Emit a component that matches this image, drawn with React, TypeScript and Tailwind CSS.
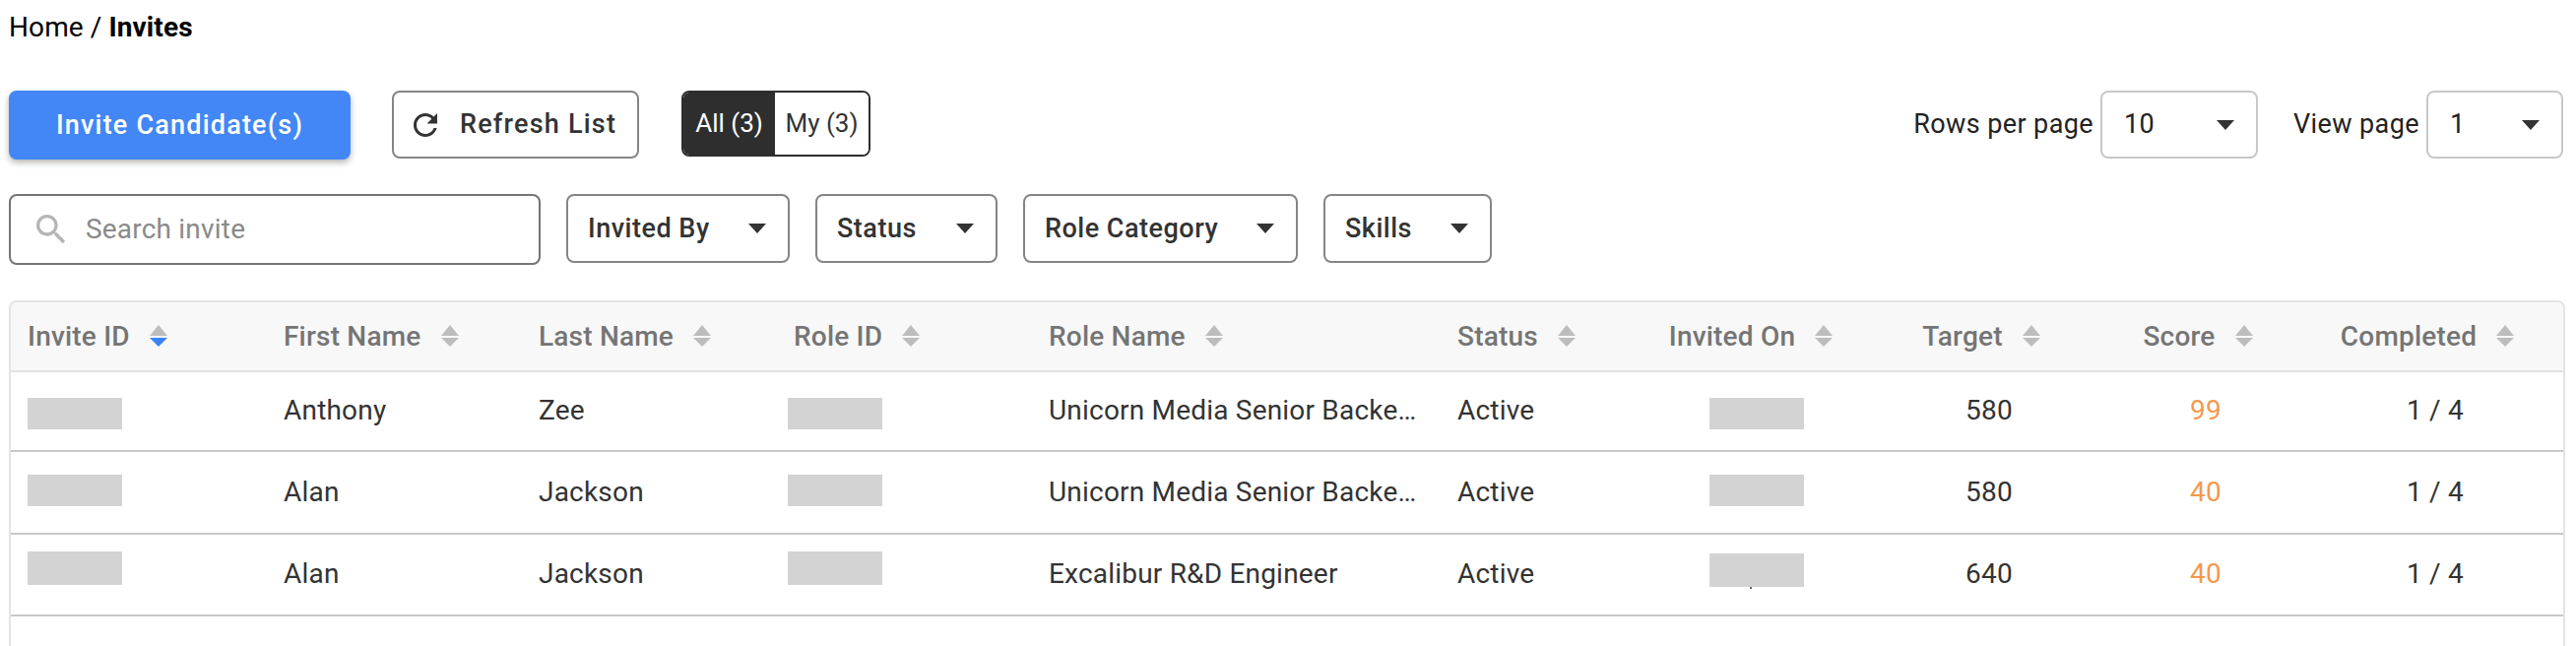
import React from "react";

const ARROW = "M0 0h18l-9 10z";

function Caret({ className = "" }: { className?: string }) {
  return (
    <svg width="18" height="10" viewBox="0 0 18 10" className={`shrink-0 ${className}`}>
      <path d={ARROW} fill="#333333" />
    </svg>
  );
}

function Sort({ active = false }: { active?: boolean }) {
  return (
    <svg width="18" height="22" viewBox="0 0 18 22" className="mb-[2px] shrink-0">
      <path d="M9 0L18 11H0z" fill="#bdbdbd" />
      <path d="M0 13h18l-9 9z" fill={active ? "#3b82f6" : "#bdbdbd"} />
    </svg>
  );
}

function Filter({ label, w }: { label: string; w: string }) {
  return (
    <div className={`flex h-[70px] items-center justify-between rounded-lg border-2 border-[#858585] pl-[20px] pr-[22px] ${w}`}>
      <span className="text-[27px] font-medium tracking-[0.5px] text-[#333333]">{label}</span>
      <Caret />
    </div>
  );
}

function Select({ value, w }: { value: string; w: string }) {
  return (
    <div className={`flex h-[69px] items-center justify-between rounded-lg border-2 border-[#c8c8c8] pl-[22px] pr-[22px] ${w}`}>
      <span className="text-[27px] tracking-[0.3px] text-[#222222]">{value}</span>
      <Caret />
    </div>
  );
}

const cols =
  "grid grid-cols-[258px_259px_259px_259px_415px_204px_238px_234px_206px_260px]";

const headers: { label: string; align: string; active?: boolean }[] = [
  { label: "Invite ID", align: "pl-[17px] gap-[20px]", active: true },
  { label: "First Name", align: "pl-[19px] gap-[20px]" },
  { label: "Last Name", align: "pl-[19px] gap-[20px]" },
  { label: "Role ID", align: "pl-[19px] gap-[20px]" },
  { label: "Role Name", align: "pl-[19px] gap-[20px]" },
  { label: "Status", align: "pl-[19px] gap-[20px]" },
  { label: "Invited On", align: "justify-center gap-[20px] pr-[12px]" },
  { label: "Target", align: "justify-center gap-[20px] pr-[16px]" },
  { label: "Score", align: "justify-center gap-[20px] pr-[16px]" },
  { label: "Completed", align: "justify-center gap-[20px] pr-[16px]" },
];

const rows = [
  { first: "Anthony", last: "Zee", role: "Unicorn Media Senior Backend Engineer", target: "580", score: "99", h: "h-[81px]", box: "mt-[26px] h-[32px]", boxI: "mt-[26px] h-[32px]" },
  { first: "Alan", last: "Jackson", role: "Unicorn Media Senior Backend Engineer", target: "580", score: "40", h: "h-[84px]", box: "mt-[23px] h-[32px]", boxI: "mt-[23px] h-[32px]" },
  { first: "Alan", last: "Jackson", role: "Excalibur R&D Engineer", target: "640", score: "40", h: "h-[83px]", box: "mt-[17px] h-[34px]", boxI: "mt-[19px] h-[34px]", mark: true },
];

const cell = "flex items-center pb-[1px] text-[28px] text-[#333333] tracking-[0.2px]";

export default function App() {
  return (
    <div className="h-[656px] w-[2616px] overflow-hidden bg-white pl-[9px] pr-[11px] font-['Roboto',sans-serif]">
      <div className="flex h-[92px] items-start pt-[12px] text-[28px] leading-[32px] tracking-[0.1px] text-black">
        <span>Home /&nbsp;</span>
        <span className="font-bold">Invites</span>
      </div>

      <div className="flex h-[70px] items-start">
        <button className="flex h-[70px] w-[347px] items-center justify-center rounded-lg bg-[#4287f5] text-[27px] font-medium tracking-[1.2px] text-white shadow-[0_3px_6px_rgba(0,0,0,0.3)]">
          Invite Candidate(s)
        </button>
        <button className="ml-[42px] flex h-[69px] w-[251px] items-center rounded-lg border-2 border-[#858585] pl-[14px] text-[27px] font-medium tracking-[1.2px] text-[#333333]">
          <svg width="36" height="36" viewBox="0 0 24 24" className="shrink-0" fill="#333333">
            <path d="M17.65 6.35C16.2 4.9 14.21 4 12 4c-4.42 0-7.99 3.58-7.99 8s3.57 8 7.99 8c3.73 0 6.84-2.55 7.73-6h-2.08c-.82 2.33-3.04 4-5.65 4-3.31 0-6-2.69-6-6s2.69-6 6-6c1.66 0 3.14.69 4.22 1.78L13 11h7V4l-2.35 2.35z" />
          </svg>
          <span className="ml-[17px]">Refresh List</span>
        </button>
        <div className="ml-[43px] flex h-[67px] w-[192px] overflow-hidden rounded-lg border-2 border-[#2e2e2e] text-[26px] font-normal">
          <div className="flex w-[93px] items-center justify-center bg-[#2e2e2e] text-white">All (3)</div>
          <div className="flex flex-1 items-center justify-center bg-white text-[#333333]">My (3)</div>
        </div>
        <div className="ml-auto mr-[2px] flex items-center">
          <span className="mr-[7px] text-[27px] tracking-[0.4px] text-[#222222]">Rows per page</span>
          <Select value="10" w="w-[160px]" />
          <span className="ml-[36px] mr-[7px] text-[27px] tracking-[0.4px] text-[#222222]">View page</span>
          <Select value="1" w="w-[139px]" />
        </div>
      </div>

      <div className="mt-[35px] flex items-start gap-[26px]">
        <div className="flex h-[72px] w-[540px] items-center rounded-lg border-2 border-[#757575] pl-[21px]">
          <svg width="40" height="40" viewBox="0 0 24 24" fill="#b5b5b5" className="shrink-0">
            <path d="M15.5 14h-.79l-.28-.27C15.41 12.59 16 11.11 16 9.5 16 5.91 13.09 3 9.5 3S3 5.91 3 9.5 5.91 16 9.5 16c1.61 0 3.09-.59 4.23-1.57l.27.28v.79l5 4.99L20.49 19l-4.99-5zm-6 0C7.01 14 5 11.99 5 9.5S7.01 5 9.5 5 14 7.01 14 9.5 11.99 14 9.5 14z" />
          </svg>
          <span className="ml-[15px] text-[28px] tracking-[0.2px] text-[#8a8a8a]">Search invite</span>
        </div>
        <Filter label="Invited By" w="w-[227px]" />
        <Filter label="Status" w="w-[185px]" />
        <Filter label="Role Category" w="w-[279px]" />
        <Filter label="Skills" w="w-[171px]" />
      </div>

      <div className="mt-[36px] h-[360px] overflow-hidden rounded-t-lg border-x-2 border-t-2 border-[#e4e4e4]">
        <div className={`${cols} h-[71px] border-b-2 border-[#e2e2e2] bg-[#f8f8f8]`}>
          {headers.map((h) => (
            <div key={h.label} className={`flex items-center text-[28px] font-medium tracking-[0.2px] text-[#757575] ${h.align}`}>
              <span>{h.label}</span>
              <Sort active={h.active} />
            </div>
          ))}
        </div>
        {rows.map((r, i) => (
          <div key={i} className={`${cols} ${r.h} border-b-2 border-[#c8c8c8]`}>
            <div className="pl-[17px]">
              <div className={`w-[96px] bg-[#d3d3d3] ${r.box}`} />
            </div>
            <div className={`${cell} pl-[19px]`}>{r.first}</div>
            <div className={`${cell} pl-[19px]`}>{r.last}</div>
            <div className="pl-[13px]">
              <div className={`w-[96px] bg-[#d3d3d3] ${r.box}`} />
            </div>
            <div className={`${cell} pl-[19px]`}>
              <span className="block w-[380px] truncate">{r.role}</span>
            </div>
            <div className={`${cell} pl-[19px]`}>Active</div>
            <div className="flex flex-col items-center">
              <div className={`w-[96px] bg-[#d3d3d3] ${r.boxI}`} />
              {r.mark && <div className="mr-[12px] h-[2px] w-[2px] bg-[#666666]" />}
            </div>
            <div className={`${cell} justify-center`}>{r.target}</div>
            <div className={`${cell} justify-center !text-[#f2994a]`}>{r.score}</div>
            <div className={`${cell} justify-center`}>1 / 4</div>
          </div>
        ))}
      </div>
    </div>
  );
}
